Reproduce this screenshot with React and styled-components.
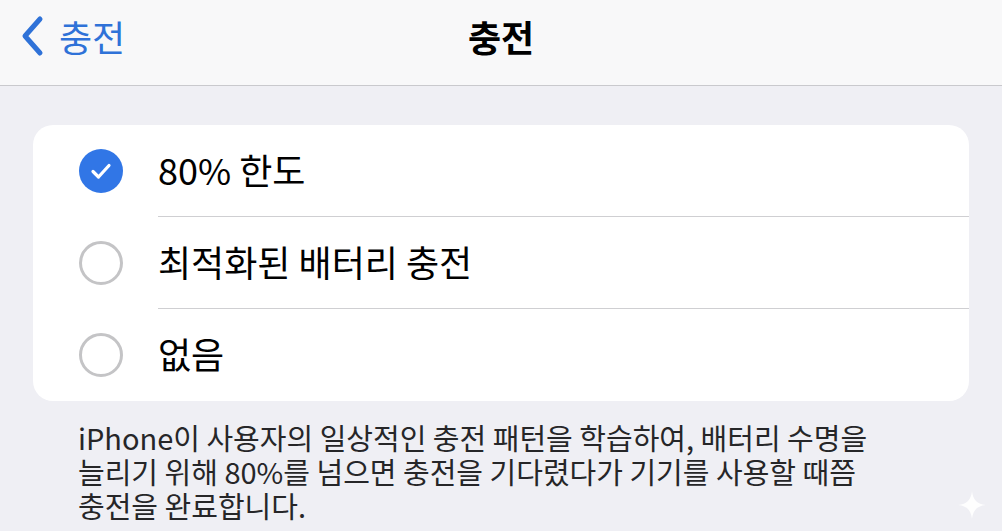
import React from 'react'
import styled, { createGlobalStyle } from 'styled-components'

const GlobalStyle = createGlobalStyle`
  html, body {
    margin: 0;
    padding: 0;
    background: #efeff4;
    font-family: "Noto Sans CJK KR", "Noto Sans", sans-serif;
    color: #000;
  }
`

const Page = styled.div`
  position: relative;
  width: 1002px;
  height: 531px;
  overflow: hidden;
  background: #efeff4;
`

const Header = styled.header`
  position: relative;
  height: 86px;
  box-sizing: border-box;
  padding-bottom: 14px;
  display: flex;
  align-items: center;
  justify-content: center;
  background: #f8f8f9;
  border-bottom: 1px solid #c9c9cd;
`

const Back = styled.div`
  position: absolute;
  left: 20px;
  top: 0;
  bottom: 14px;
  display: flex;
  align-items: center;
  gap: 15px;
  color: #2f72d8;
  font-size: 36px;
  line-height: 1;
`

const Title = styled.h1`
  margin: 0;
  font-size: 36px;
  font-weight: 700;
  line-height: 1;
`

const Content = styled.main`
  padding: 39px 33px 0;
`

const Card = styled.section`
  background: #fff;
  border-radius: 20px;
  overflow: hidden;
`

const Row = styled.div`
  display: flex;
  align-items: stretch;
  height: 92px;
  padding-left: 46px;
`

const IconCell = styled.div`
  width: 44px;
  margin-right: 35px;
  display: flex;
  align-items: center;
  justify-content: center;
`

const Radio = styled.div`
  width: 44px;
  height: 44px;
  box-sizing: border-box;
  border-radius: 50%;
  border: ${p => (p.checked ? 'none' : '3px solid #c4c4c6')};
  background: ${p => (p.checked ? '#3176e6' : 'transparent')};
  display: flex;
  align-items: center;
  justify-content: center;
`

const Label = styled.div`
  flex: 1;
  display: flex;
  align-items: center;
  font-size: 36px;
  line-height: 1;
  padding-bottom: 4px;
  border-bottom: ${p => (p.last ? 'none' : '1px solid #cfcfd2')};
`

const Note = styled.p`
  margin: 19px 0 0 45px;
  font-size: 29px;
  line-height: 34px;
  color: #262628;
`

const Sparkle = styled.div`
  position: absolute;
  right: 14px;
  bottom: 10px;
  width: 32px;
  height: 32px;
`

const options = [
  { label: '80% 한도', checked: true },
  { label: '최적화된 배터리 충전', checked: false },
  { label: '없음', checked: false },
]

const App = () => {
  return (
    <Page>
      <GlobalStyle />
      <Header>
        <Back>
          <svg width="24" height="42" viewBox="0 0 24 42">
            <path d="M20 4 L5 21 L20 38" fill="none" stroke="#2f72d8" strokeWidth="5" strokeLinecap="round" strokeLinejoin="round" />
          </svg>
          <span>충전</span>
        </Back>
        <Title>충전</Title>
      </Header>
      <Content>
        <Card>
          {options.map((o, i) => (
            <Row key={o.label}>
              <IconCell>
                <Radio checked={o.checked}>
                  {o.checked && (
                    <svg width="22" height="18" viewBox="0 0 22 18">
                      <path d="M3 9.5 L8.5 15 L19 3.5" fill="none" stroke="#fff" strokeWidth="3.2" strokeLinecap="round" strokeLinejoin="round" />
                    </svg>
                  )}
                </Radio>
              </IconCell>
              <Label last={i === options.length - 1}>{o.label}</Label>
            </Row>
          ))}
        </Card>
        <Note>
          iPhone이 사용자의 일상적인 충전 패턴을 학습하여, 배터리 수명을
          <br />
          늘리기 위해 80%를 넘으면 충전을 기다렸다가 기기를 사용할 때쯤
          <br />
          충전을 완료합니다.
        </Note>
      </Content>
      <Sparkle>
        <svg width="32" height="32" viewBox="0 0 32 32">
          <path d="M16 2 C17 11 21 15 30 16 C21 17 17 21 16 30 C15 21 11 17 2 16 C11 15 15 11 16 2 Z" fill="#ffffff" opacity="0.9" />
        </svg>
      </Sparkle>
    </Page>
  )
}

export default App
